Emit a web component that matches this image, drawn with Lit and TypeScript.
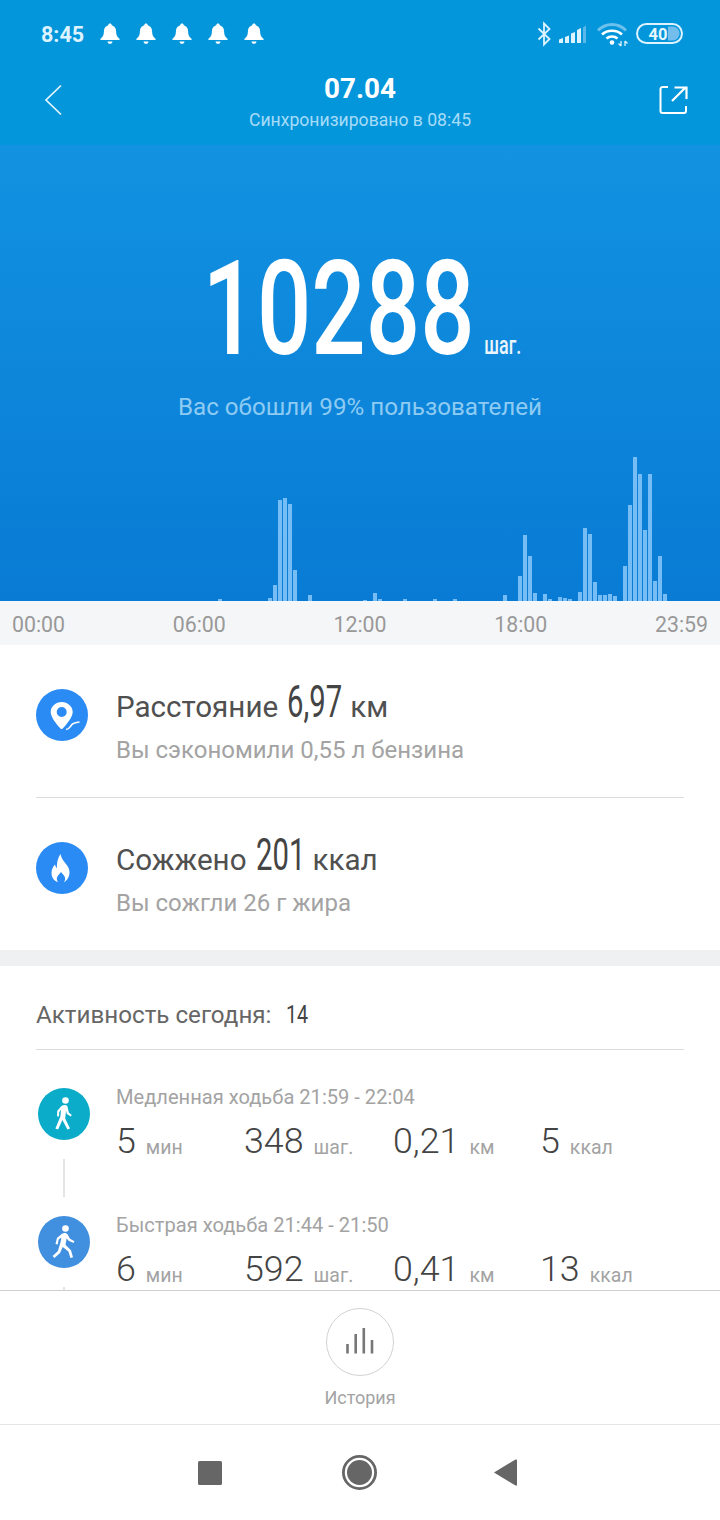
import { LitElement, html, css, svg } from "lit";
import { customElement } from "lit/decorators.js";

const BARS: [number, number][] = [
  [218, 2], [268, 3], [273, 16], [278, 101], [283, 103], [288, 97], [293, 31], [308, 6],
  [363, 1], [373, 8], [378, 2], [403, 2], [433, 2], [453, 2], [503, 6], [518, 25], [523, 66],
  [528, 45], [533, 8], [543, 7], [548, 2], [558, 4], [563, 3], [568, 2], [578, 9], [583, 73],
  [588, 67], [593, 19], [598, 6], [603, 6], [608, 7], [613, 5], [623, 35], [628, 96], [633, 144],
  [638, 127], [643, 71], [648, 127], [653, 20], [658, 45], [663, 7],
];

const bell = svg`<svg class="bell" viewBox="0 0 20 22" width="20" height="22"><path d="M10 0.500c1 0 1.700.7 1.700 1.700 3 .8 4.300 3.200 4.400 6.200.1 3.300.8 5.300 3.400 7.400.4.400.2 1.100-.4 1.100H.9c-.6 0-.8-.7-.4-1.100C3.100 13.700 3.800 11.700 3.900 8.400 4 5.400 5.300 3 8.300 2.200 8.300 1.200 9 .5 10 .5z" fill="#fff"/><path d="M7.500 18.500h5c-.2 1.400-1.200 2.300-2.500 2.300s-2.300-.9-2.500-2.300z" fill="#fff"/></svg>`;

const walkSlow = svg`<svg viewBox="0 0 52 52" width="52" height="52"><circle cx="26" cy="26" r="26" fill="#0BACC9"/><circle cx="27.500" cy="12.500" r="3.300" fill="#fff"/><path d="M23.500 18c2-1.500 5-1.500 6 .5l1.300 6 3 2.500-1 1.600-4-2.600-.8-3-.8 7.500 4.800 10-2.600 1-5-9.500-4.300 9.500-2.700-1 5-12 .6-7-1.800 2.800-.2 4.200-2-.2.300-5.500z" fill="#fff"/></svg>`;

const walkFast = svg`<svg viewBox="0 0 52 52" width="52" height="52"><circle cx="26" cy="26" r="26" fill="#418FDF"/><circle cx="27.500" cy="12.500" r="3.300" fill="#fff"/><path d="M24 17.800c2.300-1.200 4.800-.8 5.800 1l2.200 4 4.500 2.400-1 1.800-5.300-2.600-1.500-2.200-1.200 6.500 5.500 5.500 2 7-2.600.8-2-6.500-5.700-4.600-2.600 6-5.700 5.200-1.800-2 5.300-5 2.700-9.200.8-4.300-2.700 2-1 4.800-2.200-.5 1.400-6z" fill="#fff"/></svg>`;

@customElement("app-root")
export class AppRoot extends LitElement {
  static styles = css`
    :host {
      display: block;
      width: 720px;
      height: 1520px;
      overflow: hidden;
      background: #fff;
      font-family: Roboto, "Noto Sans", sans-serif;
      color: #444;
    }
    .page { display: flex; flex-direction: column; height: 1520px; }

    .top { height: 145px; background: #0496DB; color: #fff; display: flex; flex-direction: column; flex: none; }
    .status { height: 68px; padding: 0 37px 0 41px; display: flex; align-items: center; box-sizing: border-box; }
    .time { font-size: 21.500px; font-weight: 700; color: #DDF3FF; width: 59px; }
    .bells { display: flex; gap: 16px; }
    .bell { display: block; }
    .right { margin-left: auto; display: flex; align-items: center; }
    .nav { display: grid; grid-template-columns: 90px 1fr 90px; align-items: start; }
    .back { display: block; margin: 16px 0 0 44px; }
    .share { display: block; margin: 17px 32px 0 0; justify-self: end; }
    .title { text-align: center; }
    .date { font-size: 27.800px; font-weight: 700; line-height: 32px; margin-top: 5px; }
    .sync { font-size: 17.600px; color: #A6DCF8; line-height: 22px; margin-top: 4px; }

    .hero {
      height: 456px; flex: none;
      background: linear-gradient(#1292E1, #097BD4);
      position: relative;
      color: #fff;
      display: flex; flex-direction: column; align-items: center;
    }
    .numrow { display: flex; align-items: baseline; margin-top: 99px; height: 130px; margin-left: 6px; gap: 13px; }
    .big {
      font-size: 132px; line-height: 130px; width: 267px; font-weight: 500;
      display: flex; justify-content: center;
    }
    .big span { display: block; flex: none; transform: scaleX(0.725); }
    .unit {
      font-size: 25px; width: 36px; font-weight: 500; line-height: 24px; color: #EAF5FD;
      display: flex; justify-content: center; white-space: nowrap;
    }
    .unit span { display: block; flex: none; transform: scaleX(0.72); }
    .beat { font-size: 24.200px; color: #8ECBF3; line-height: 30px; margin-top: 18px; }
    .bar { position: absolute; bottom: 0; width: 4px; background: #77BDF5; }

    .axis {
      height: 44px; flex: none; background: #F5F6F8; color: #999;
      display: flex; justify-content: space-between; align-items: center;
      padding: 3px 12px 0; box-sizing: border-box; font-size: 21.300px;
    }

    .stats { padding: 0 36px; flex: none; height: 305px; box-sizing: border-box; }
    .stat { display: flex; height: 152px; align-items: flex-start; box-sizing: border-box; }
    .stat + .stat { border-top: 1px solid #DDD; height: 153px; }
    .stat svg { display: block; margin-top: 44px; flex: none; }
    .body { margin-left: 28px; padding-top: 36px; }
    .line1 { font-size: 29.600px; line-height: 42px; color: #505050; display: flex; align-items: baseline; white-space: nowrap; }
    .num { font-size: 44px; margin: 0 8px 0 9px; color: #444; display: inline-block; }
    .num span { display: inline-block; transform: scaleX(0.665); transform-origin: left; }
    .line2 { font-size: 24px; color: #A3A3A3; line-height: 28px; margin-top: 8px; }
    .gap { height: 16px; background: #EEF0F1; flex: none; }

    .activity { flex: 1; min-height: 0; overflow: hidden; padding: 0 36px; position: relative; }
    .head {
      height: 84px; box-sizing: border-box; border-bottom: 1px solid #DDD;
      display: flex; align-items: center; font-size: 24.200px; color: #666; padding-top: 15px;
    }
    .head b { font-weight: 400; margin: 0 0 3px 15px; color: #444; font-size: 26.500px; width: 22px; }
    .head b span { display: inline-block; transform: scaleX(0.74); transform-origin: left; }
    .row { display: flex; height: 128px; position: relative; }
    .icon { width: 56px; flex: none; padding-top: 38px; padding-left: 2px; box-sizing: border-box; }
    .icon svg { display: block; }
    .conn { position: absolute; left: 27px; top: 109px; width: 2px; height: 38px; background: #E4E4E4; }
    .info { margin-left: 24px; padding-top: 35px; }
    .label { font-size: 20.100px; color: #A3A3A3; line-height: 24px; white-space: nowrap; }
    .vals { display: grid; grid-template-columns: 128px 149px 147px auto; margin-top: 10px; align-items: baseline; white-space: nowrap; }
    .v { font-size: 35.800px; color: #444; font-weight: 300; line-height: 44px; }
    .u { font-size: 19.500px; color: #A3A3A3; margin-left: 10px; vertical-align: -1px; }

    .hist {
      height: 135px; flex: none; border-top: 1px solid #CFCFCF; border-bottom: 1px solid #E5E5E5; background: #fff;
      display: flex; flex-direction: column; align-items: center; box-sizing: border-box;
    }
    .circle { margin-top: 17px; display: block; flex: none; }
    .hist span { font-size: 18px; color: #A3A3A3; line-height: 22px; margin-top: 11px; }

    .sysnav { height: 95px; flex: none; display: flex; align-items: center; padding-left: 198px; gap: 0; }
    .sysnav svg { display: block; flex: none; }
    .s2 { margin-left: 120px; }
    .s3 { margin-left: 117px; }
  `;

  private row(label: string, vals: [string, string][], icon: unknown) {
    return html`<div class="row">
      <div class="icon">${icon}</div>
      <div class="conn"></div>
      <div class="info">
        <div class="label">${label}</div>
        <div class="vals">${vals.map(([v, u]) => html`<div><span class="v">${v}</span><span class="u">${u}</span></div>`)}</div>
      </div>
    </div>`;
  }

  render() {
    return html`<div class="page">
      <div class="top">
        <div class="status">
          <div class="time">8:45</div>
          <div class="bells">${[0, 1, 2, 3, 4].map(() => bell)}</div>
          <div class="right">
            <svg width="146" height="26" viewBox="0 0 146 26">
              <path d="M1.500 7.500 L12.500 18 L7 23.500 V2.500 L12.500 8 L1.500 18.500" fill="none" stroke="#DDF3FF" stroke-width="1.800"/>
              <g fill="#DDF3FF">
                <path d="M22 18.500l4-1.500v5h-4zM28 16l4-1.500V22h-4zM34 12.500l4-1.500V22h-4zM40 9l4-2v15h-4z"/>
              </g>
              <path d="M46 6.500l3-2V22h-3z" fill="#5CB8EA"/>
              <path d="M61 9.500c8-8 20-8 28 0" fill="none" stroke="#6DC0EC" stroke-width="2.800"/>
              <path d="M65 13.500c5.500-5 14.500-5 20 0M69.500 17.500c3-2.600 8-2.600 11 0" fill="none" stroke="#fff" stroke-width="2.600"/>
              <circle cx="75" cy="21.500" r="2.300" fill="#fff"/>
              <path d="M84 20v5M81.500 22.500l2.500 2.500M88 20v5M88 20l2.500 2.500" stroke="#DDF3FF" stroke-width="1.300" fill="none"/>
              <rect x="100" y="3" width="45" height="19" rx="9.500" fill="none" stroke="#DDF3FF" stroke-width="2"/>
              <path d="M131 5.500h4.500a7 7 0 0 1 0 14H131z" fill="#72BDEB"/>
              <text x="121" y="18.500" text-anchor="middle" font-family="Roboto" font-weight="700" font-size="16.500" fill="#E6F6FF">40</text>
            </svg>
          </div>
        </div>
        <div class="nav">
          <svg class="back" width="20" height="32" viewBox="0 0 20 32"><path d="M17 1.500 L2 16 L17 30.500" fill="none" stroke="#E4F5FF" stroke-width="1.700"/></svg>
          <div class="title">
            <div class="date">07.04</div>
            <div class="sync">Синхронизировано в 08:45</div>
          </div>
          <svg class="share" width="30" height="30" viewBox="0 0 30 30"><path d="M10 2H4.500A2 2 0 0 0 2.500 4v22a2 2 0 0 0 2 2H26a2 2 0 0 0 2-2V21" fill="none" stroke="#fff" stroke-width="2"/><path d="M14 16 L27 3M16.500 2.500H28.500V14" fill="none" stroke="#fff" stroke-width="2.200"/></svg>
        </div>
      </div>

      <div class="hero">
        <div class="numrow">
          <div class="big"><span>10288</span></div>
          <div class="unit"><span>шаг.</span></div>
        </div>
        <div class="beat">Вас обошли 99% пользователей</div>
        ${BARS.map(([x, h]) => html`<div class="bar" style="left:${x}px;height:${h}px"></div>`)}
      </div>

      <div class="axis"><span>00:00</span><span>06:00</span><span>12:00</span><span>18:00</span><span>23:59</span></div>

      <div class="stats">
        <div class="stat">
          <svg width="52" height="52" viewBox="0 0 52 52"><circle cx="26" cy="26" r="26" fill="#2B8BF5"/>
            <path fill-rule="evenodd" d="M25.700 13c-6 0-11 4.500-11 10 0 5 5.500 12 9.800 16.500.7.700 1.500.7 2.200 0 4.300-4.500 10-11.500 10-16.500 0-5.500-5-10-11-10zm0 5a5 5 0 1 1 0 10 5 5 0 0 1 0-10z" fill="#fff"/>
            <path d="M30 40.500c3 0 3.500-2 5.500-4.500 1.500-2 3-2.500 8-3" fill="none" stroke="#fff" stroke-width="1.700"/></svg>
          <div class="body">
            <div class="line1">Расстояние<span class="num" style="width:55px"><span>6,97</span></span>км</div>
            <div class="line2">Вы сэкономили 0,55 л бензина</div>
          </div>
        </div>
        <div class="stat">
          <svg width="52" height="52" viewBox="0 0 52 52"><circle cx="26" cy="26" r="26" fill="#2B8BF5"/>
            <path d="M24.500 12c.8 4.500 3 6.700 5.500 10 2.200 3 3.500 5 3.500 8.500 0 5-3.400 9-5.500 9.500 1-1.500 1.500-3 1-4.500-.5-1.800-2.500-3.500-4-5.500-1.500 2-3.500 3.700-4 5.500-.5 1.500 0 3 1 4.500-2.500-.5-6.500-3.500-6.500-9 0-3.500 1.500-6.500 3.500-8.500.3 1.500 1 3 2 3.500C20.500 20 22.500 15 24.500 12z" fill="#fff"/></svg>
          <div class="body">
            <div class="line1">Сожжено<span class="num" style="width:49px"><span>201</span></span>ккал</div>
            <div class="line2">Вы сожгли 26 г жира</div>
          </div>
        </div>
      </div>
      <div class="gap"></div>

      <div class="activity">
        <div class="head">Активность сегодня:<b><span>14</span></b></div>
        ${this.row("Медленная ходьба 21:59 - 22:04", [["5", "мин"], ["348", "шаг."], ["0,21", "км"], ["5", "ккал"]], walkSlow)}
        ${this.row("Быстрая ходьба 21:44 - 21:50", [["6", "мин"], ["592", "шаг."], ["0,41", "км"], ["13", "ккал"]], walkFast)}
      </div>

      <div class="hist">
        <svg class="circle" width="68" height="68" viewBox="0 0 68 68">
          <circle cx="34" cy="34" r="33.500" fill="none" stroke="#D2D2D2"/>
          <path d="M21.500 45.500V36M29.700 45.500V26M37.800 45.500V20M46 45.500V32" stroke="#777" stroke-width="2.600" fill="none"/>
        </svg>
        <span>История</span>
      </div>

      <div class="sysnav">
        <svg width="24" height="24" viewBox="0 0 24 24"><rect x="0" y="0" width="24" height="24" rx="1.500" fill="#666"/></svg>
        <svg class="s2" width="35" height="35" viewBox="0 0 35 35"><circle cx="17.500" cy="17.500" r="16.100" fill="none" stroke="#666" stroke-width="2.800"/><circle cx="17.500" cy="17.500" r="12.500" fill="#666"/></svg>
        <svg class="s3" width="23" height="27" viewBox="0 0 23 27"><path d="M0 13.500 L21.500 .5 Q23 0 23 1.500 V25.500 Q23 27 21.500 26.500z" fill="#666"/></svg>
      </div>
    </div>`;
  }
}
